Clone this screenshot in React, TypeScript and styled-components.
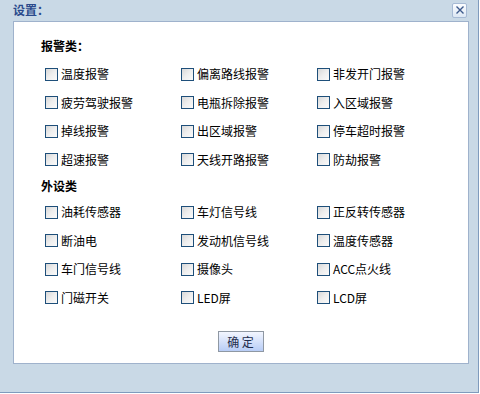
import styled, { createGlobalStyle } from "styled-components";

const GlobalStyle = createGlobalStyle`
  body {
    margin: 0;
    background: #ffffff;
    font-family: "Noto Sans CJK SC", "Liberation Sans", sans-serif;
    font-size: 12px;
  }
`;

const alarmItems = [
  "温度报警", "偏离路线报警", "非发开门报警",
  "疲劳驾驶报警", "电瓶拆除报警", "入区域报警",
  "掉线报警", "出区域报警", "停车超时报警",
  "超速报警", "天线开路报警", "防劫报警",
];

const deviceItems = [
  "油耗传感器", "车灯信号线", "正反转传感器",
  "断油电", "发动机信号线", "温度传感器",
  "车门信号线", "摄像头", "ACC点火线",
  "门磁开关", "LED屏", "LCD屏",
];

function App() {
  return (
    <>
      <GlobalStyle />
      <Window>
        <TitleBar>
          <Title>设置：</Title>
          <CloseButton>
            <svg width="10" height="10" viewBox="0 0 10 10">
              <path d="M1.5 1.5 L8.5 8.5 M8.5 1.5 L1.5 8.5" stroke="#3d5a8c" strokeWidth="1.4" />
            </svg>
          </CloseButton>
        </TitleBar>
        <Panel>
          <Heading>报警类：</Heading>
          <OptionGrid>
            {alarmItems.map((item) => (
              <Option key={item}>
                <CheckBox />
                <span>{item}</span>
              </Option>
            ))}
          </OptionGrid>
          <Heading $top={4}>外设类</Heading>
          <OptionGrid $top={4}>
            {deviceItems.map((item) => (
              <Option key={item}>
                <CheckBox />
                <span>{item}</span>
              </Option>
            ))}
          </OptionGrid>
          <Footer>
            <OkButton>确 定</OkButton>
          </Footer>
        </Panel>
      </Window>
    </>
  );
}

const Window = styled.div`
  width: 478px;
  height: 392px;
  background: #c9d9e6;
  border-right: 1px solid #7f9bbd;
  border-bottom: 1px solid #7f9bbd;
`;

const TitleBar = styled.div`
  height: 21px;
  display: flex;
  align-items: center;
  justify-content: space-between;
  padding: 0 10px 0 13px;
`;

const Title = styled.div`
  color: #2a4a8c;
  font-weight: bold;
  font-size: 12px;
  line-height: 16px;
  margin-top: -2px;
`;

const CloseButton = styled.div`
  width: 13px;
  height: 13px;
  display: flex;
  align-items: center;
  justify-content: center;
  background: linear-gradient(#fbfdff, #dde8f4);
  border: 1px solid #a7bbd5;
  border-radius: 2px;
  margin-top: -1px;
  margin-right: 1px;
`;

const Panel = styled.div`
  box-sizing: border-box;
  margin-left: 13px;
  width: 456px;
  height: 343px;
  background: #ffffff;
  border: 1px solid #9fb2cc;
  padding: 16px 0 0 27px;
`;

const Heading = styled.div<{ $top?: number }>`
  font-weight: bold;
  color: #000000;
  line-height: 16px;
  margin-top: ${(p) => p.$top ?? 0}px;
`;

const OptionGrid = styled.div<{ $top?: number }>`
  display: grid;
  grid-template-columns: repeat(3, 136px);
  grid-auto-rows: 28.5px;
  margin-top: ${(p) => p.$top ?? 6}px;
  padding-left: 4px;
`;

const Option = styled.label`
  display: flex;
  align-items: center;
  gap: 3px;
  color: #000000;
  line-height: 14px;
`;

const CheckBox = styled.span`
  width: 11px;
  height: 11px;
  border: 1px solid #1e4f7a;
  background: linear-gradient(135deg, #d8d8d8 0%, #eeeeee 50%, #fafafa 100%);
  flex-shrink: 0;
`;

const Footer = styled.div`
  display: flex;
  justify-content: center;
  margin-top: 19px;
  padding-right: 28px;
`;

const OkButton = styled.button`
  width: 46px;
  height: 21px;
  padding: 0;
  border: 1px solid #8f98a3;
  background: linear-gradient(#f3f6ff, #b8cdf6);
  color: #1f2d4d;
  font-family: "Noto Sans CJK SC", "Liberation Sans", sans-serif;
  font-size: 12px;
  line-height: 19px;
`;

export default App;
